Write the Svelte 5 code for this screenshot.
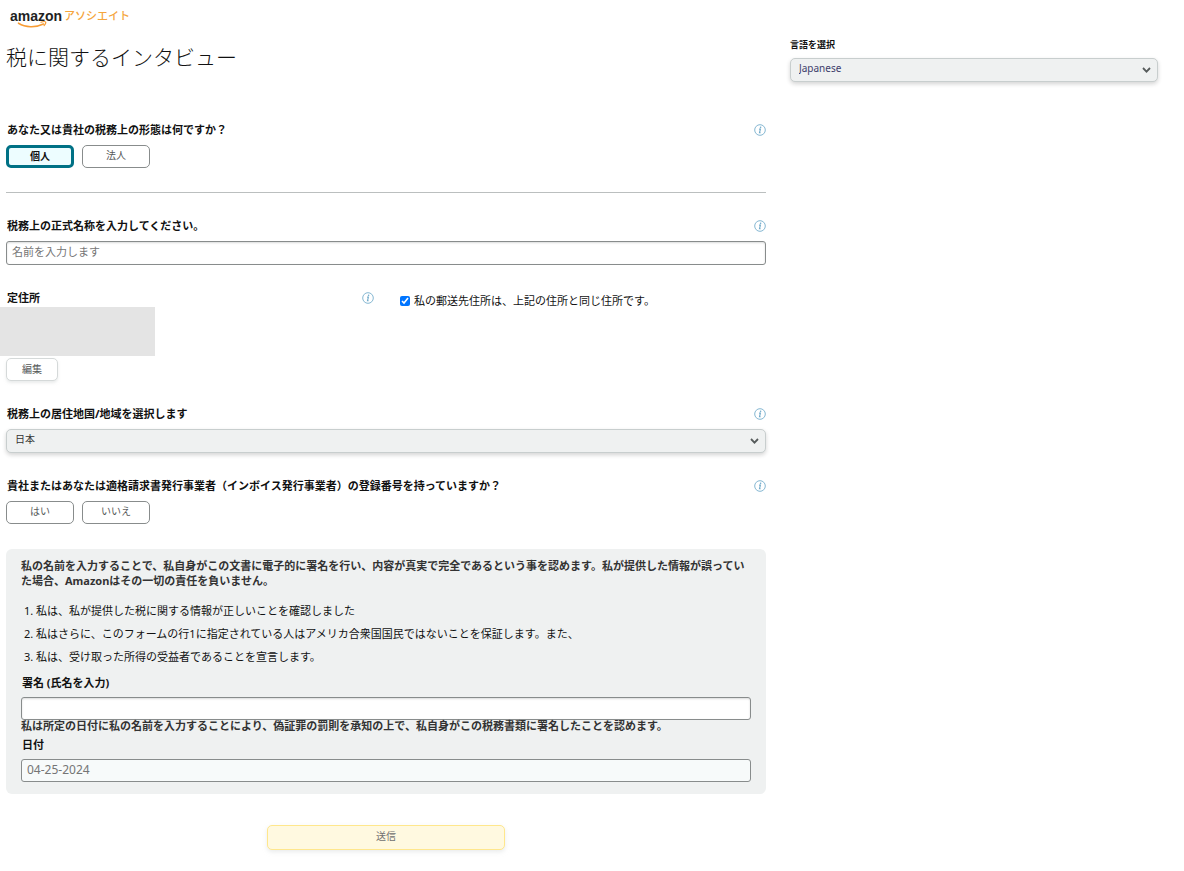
<script lang="ts">
  let entity = $state('個人');
  let invoice = $state('');
  let language = $state('Japanese');
  let country = $state('日本');
  let name = $state('');
  let sameAddress = $state(true);
  let signature = $state('');

  const statements = [
    '私は、私が提供した税に関する情報が正しいことを確認しました',
    '私はさらに、このフォームの行1に指定されている人はアメリカ合衆国国民ではないことを保証します。また、',
    '私は、受け取った所得の受益者であることを宣言します。',
  ];
</script>

{#snippet info()}
  <button type="button" class="info" aria-label="ヘルプ">
    <svg viewBox="0 0 12 12" width="12" height="12">
      <circle cx="6" cy="6" r="5.3" fill="#fff" stroke="#85b7d2" stroke-width="1" />
      <path d="M5.1 5.1h1.3l-.9 3.7h1.1" fill="none" stroke="#6fa9c9" stroke-width="1.1" />
      <circle cx="6.6" cy="3.2" r=".8" fill="#6fa9c9" />
    </svg>
  </button>
{/snippet}

{#snippet chevron()}
  <svg class="chevron" viewBox="0 0 9 6" width="9" height="6">
    <path d="M1 1l3.5 3.6L8 1" fill="none" stroke="#565b5b" stroke-width="1.8" />
  </svg>
{/snippet}

<div class="page">
  <main>
    <header>
      <svg class="logo" viewBox="0 0 130 24" width="130" height="24" role="img" aria-label="amazonアソシエイト">
        <text x="4" y="15" class="brand">amazon</text>
        <text x="58" y="14" class="program">アソシエイト</text>
        <path d="M12.5 17.2c7 4.400 17 4.600 25 .8" fill="none" stroke="#f79c34" stroke-width="1.600" stroke-linecap="round" />
        <path d="M35 16.300c2-.8 4-.9 4.500-.4s-.2 2.400-1.400 3.700" fill="none" stroke="#f79c34" stroke-width="1.200" stroke-linecap="round" />
      </svg>
      <h1>税に関するインタビュー</h1>
    </header>

    <form onsubmit={(e) => e.preventDefault()}>
      <section class="entity">
        <div class="label-row">
          <span class="label">あなた又は貴社の税務上の形態は何ですか？</span>
          {@render info()}
        </div>
        <div class="choices">
          {#each ['個人', '法人'] as option (option)}
            <button type="button" class:selected={entity === option} onclick={() => (entity = option)}>{option}</button>
          {/each}
        </div>
      </section>

      <hr />

      <section>
        <div class="label-row">
          <label class="label" for="name">税務上の正式名称を入力してください。</label>
          {@render info()}
        </div>
        <input id="name" class="text" type="text" placeholder="名前を入力します" bind:value={name} />
      </section>

      <section class="address">
        <div>
          <div class="label-row">
            <span class="label">定住所</span>
            {@render info()}
          </div>
          <div class="address-block"></div>
          <button type="button" class="edit">編集</button>
        </div>
        <label class="check">
          <input type="checkbox" bind:checked={sameAddress} />
          <span>私の郵送先住所は、上記の住所と同じ住所です。</span>
        </label>
      </section>

      <section>
        <div class="label-row">
          <label class="label" for="country">税務上の居住地国/地域を選択します</label>
          {@render info()}
        </div>
        <div class="select">
          <select id="country" bind:value={country}>
            <option>日本</option>
          </select>
          {@render chevron()}
        </div>
      </section>

      <section>
        <div class="label-row">
          <span class="label">貴社またはあなたは適格請求書発行事業者（インボイス発行事業者）の登録番号を持っていますか？</span>
          {@render info()}
        </div>
        <div class="choices">
          {#each ['はい', 'いいえ'] as option (option)}
            <button type="button" class:selected={invoice === option} onclick={() => (invoice = option)}>{option}</button>
          {/each}
        </div>
      </section>

      <div class="panel">
        <p>私の名前を入力することで、私自身がこの文書に電子的に署名を行い、内容が真実で完全であるという事を認めます。私が提供した情報が誤っていた場合、Amazonはその一切の責任を負いません。</p>
        <ol>
          {#each statements as statement}
            <li>{statement}</li>
          {/each}
        </ol>
        <label class="label" for="signature">署名 (氏名を入力)</label>
        <input id="signature" class="text" type="text" bind:value={signature} />
        <p class="oath">私は所定の日付に私の名前を入力することにより、偽証罪の罰則を承知の上で、私自身がこの税務書類に署名したことを認めます。</p>
        <label class="label" for="date">日付</label>
        <input id="date" class="text date" type="text" value="04-25-2024" readonly />
      </div>

      <button class="submit">送信</button>
    </form>
  </main>

  <aside>
    <label for="language">言語を選択</label>
    <div class="select">
      <select id="language" class="language" bind:value={language}>
        <option>Japanese</option>
      </select>
      {@render chevron()}
    </div>
  </aside>
</div>

<style>
  :global(body) {
    background: #fff;
  }

  .page {
    display: grid;
    grid-template-columns: 95fr 46fr;
    gap: 24px;
    padding: 6px 26px 20px 6px;
    font-family: "Noto Sans", "Noto Sans CJK JP", sans-serif;
    font-size: 11px;
    line-height: 16px;
    color: #111;
  }

  .page * {
    box-sizing: border-box;
  }

  button,
  input,
  select {
    font-family: inherit;
    margin: 0;
  }

  .logo {
    display: block;
    overflow: visible;
  }

  .brand {
    font: bold 14px "Liberation Sans", sans-serif;
    fill: #221f1f;
  }

  .program {
    font: 500 11px "Noto Sans CJK JP", sans-serif;
    fill: #f5a53c;
  }

  h1 {
    margin: 12px 0 0;
    font-size: 21px;
    font-weight: 300;
    line-height: 30px;
  }

  form {
    display: flex;
    flex-direction: column;
    padding-top: 50px;
  }

  section {
    margin-bottom: 25px;
  }

  .entity {
    margin-bottom: 24px;
  }

  .label-row {
    display: flex;
    align-items: center;
    justify-content: space-between;
    margin-bottom: 7px;
  }

  .label {
    padding-left: 1px;
    font-weight: bold;
    color: #111;
  }

  .info {
    display: flex;
    padding: 0;
    border: 0;
    background: none;
    cursor: pointer;
  }

  .choices {
    display: flex;
    gap: 8px;
  }

  .choices button {
    width: 68px;
    height: 23px;
    padding: 0 0 3px;
    border: 1px solid #888c8c;
    border-radius: 5px;
    background: #fff;
    font-size: 10px;
    line-height: 16px;
    color: #565959;
  }

  .choices .selected {
    border: 3px solid #007185;
    background: #edfdff;
    font-weight: bold;
    color: #111;
  }

  hr {
    width: 100%;
    margin: 0 0 25px;
    border: 0;
    border-top: 1px solid #bbbfbf;
  }

  .text {
    display: block;
    width: 100%;
    height: 24px;
    padding: 0 5px 3px;
    border: 1px solid #888c8c;
    border-radius: 3px;
    background: #fff;
    box-shadow: inset 0 1px 2px rgba(15, 17, 17, 0.15);
    font-size: 11px;
    color: #111;
  }

  .text::placeholder {
    color: #757575;
  }

  .address {
    display: grid;
    grid-template-columns: 1fr 1fr;
    gap: 24px;
  }

  .address .label-row {
    margin-bottom: 1px;
  }

  .address-block {
    width: 155px;
    height: 49px;
    margin-left: -6px;
    background: #e4e4e4;
  }

  .edit {
    display: block;
    width: 52px;
    height: 23px;
    margin-top: 2px;
    padding: 0 0 3px;
    border: 1px solid #d5d9d9;
    border-radius: 5px;
    background: #fff;
    box-shadow: 0 2px 3px rgba(213, 217, 217, 0.5);
    font-size: 10px;
    color: #565959;
  }

  .check {
    display: flex;
    align-items: center;
    align-self: start;
    gap: 4px;
    padding: 3px 0 0 2px;
  }

  .check input {
    width: 10px;
    height: 10px;
  }

  .select {
    position: relative;
  }

  select {
    display: block;
    width: 100%;
    height: 24px;
    padding: 0 24px 4px 8px;
    border: 1px solid #c8cece;
    border-radius: 5px;
    background: #eff1f1;
    box-shadow: 0 2px 4px rgba(15, 17, 17, 0.18);
    appearance: none;
    font-size: 10px;
    color: #333;
  }

  .language {
    color: #3d3d6b;
  }

  .chevron {
    position: absolute;
    top: 9px;
    right: 7px;
    pointer-events: none;
  }

  .panel {
    display: flex;
    flex-direction: column;
    padding: 9px 15px 12px;
    border-radius: 6px;
    background: #eff1f1;
  }

  .panel p {
    margin: 0;
    font-weight: bold;
    line-height: 15px;
    color: #333;
  }

  .panel ol {
    margin: 11px 0 7px;
    padding-left: 15px;
    line-height: 23px;
  }

  .panel .text {
    margin-top: 6px;
    height: 23px;
  }

  .panel .oath {
    margin-bottom: 5px;
    line-height: 12px;
  }

  .panel .date {
    background: #f7fafa;
    box-shadow: none;
    font-size: 12px;
    color: #757575;
  }

  .submit {
    align-self: center;
    width: 238px;
    height: 25px;
    margin-top: 31px;
    padding: 0 0 5px;
    border: 1px solid #ffe78c;
    border-radius: 5px;
    background: #fff9e0;
    box-shadow: 0 2px 4px rgba(213, 217, 217, 0.5);
    font-size: 10px;
    color: #707070;
  }

  aside {
    padding-top: 31px;
  }

  aside label {
    display: block;
    margin-bottom: 5px;
    font-size: 9px;
    font-weight: bold;
  }
</style>
